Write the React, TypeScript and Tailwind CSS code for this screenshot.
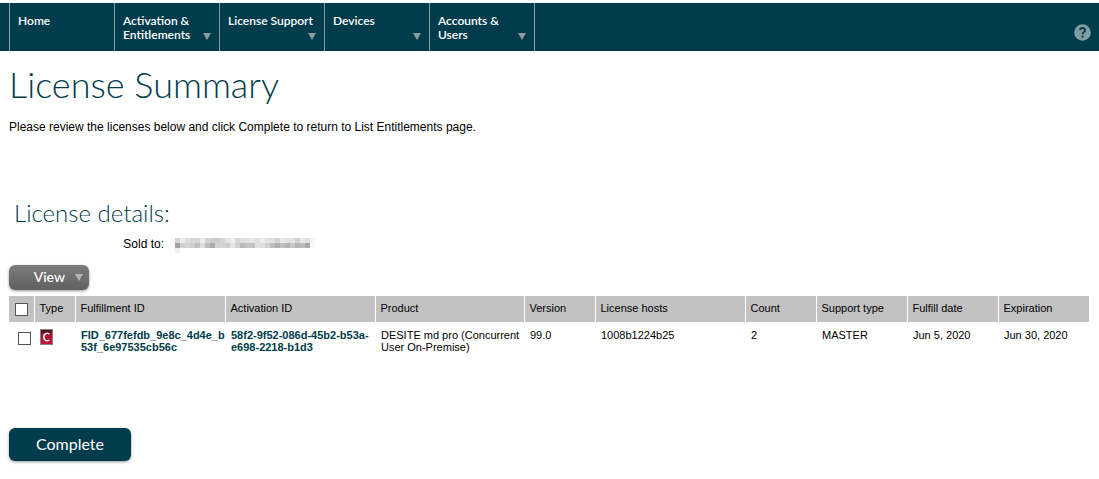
import { useState } from 'react'
import clsx from 'clsx'

const navItems = [
  { label: 'Home', menu: false },
  { label: 'Activation & Entitlements', menu: true },
  { label: 'License Support', menu: true },
  { label: 'Devices', menu: true },
  { label: 'Accounts & Users', menu: true },
]

const columns = [
  { label: 'Type', width: 'w-[41px]' },
  { label: 'Fulfillment ID', width: 'w-[150px]' },
  { label: 'Activation ID', width: 'w-[150px]' },
  { label: 'Product', width: 'w-[149px]' },
  { label: 'Version', width: 'w-[71px]' },
  { label: 'License hosts', width: 'w-[150px]' },
  { label: 'Count', width: 'w-[71px]' },
  { label: 'Support type', width: 'w-[91px]' },
  { label: 'Fulfill date', width: 'w-[91px]' },
  { label: 'Expiration', width: 'w-[91px]' },
]

const licenses = [
  {
    fulfillmentId: 'FID_677fefdb_9e8c_4d4e_b53f_6e97535cb56c',
    activationId: '58f2-9f52-086d-45b2-b53a-e698-2218-b1d3',
    product: 'DESITE md pro (Concurrent User On-Premise)',
    version: '99.0',
    host: '1008b1224b25',
    count: 2,
    support: 'MASTER',
    fulfillDate: 'Jun 5, 2020',
    expiration: 'Jun 30, 2020',
  },
]

// Grey levels of the masked customer name, one entry per block
const maskRows = [
  [249, 213, 236, 221, 214, 214, 236, 211, 204, 203, 216, 228, 240, 214, 222, 226, 232, 222, 238, 226, 226, 213, 232, 226, 226, 208, 232, 222, 246],
  [251, 163, 208, 212, 206, 190, 220, 190, 170, 212, 212, 206, 228, 210, 186, 196, 194, 226, 222, 208, 188, 176, 190, 180, 200, 182, 190, 168, 249],
  [255, 240],
]

function Caret({ className }: { className?: string }) {
  return (
    <svg className={clsx('h-[7px] w-2', className)} viewBox="0 0 8 7" fill="currentColor" aria-hidden="true">
      <path d="M0 0h8L4 7z" />
    </svg>
  )
}

function MaskedName() {
  return (
    <svg className="h-[15px] w-[145px]" viewBox="0 0 29 3" shapeRendering="crispEdges" role="img" aria-label="Hidden">
      {maskRows.map((row, y) =>
        row.map((v, x) => <rect key={`${x}-${y}`} x={x} y={y} width="1" height="1" fill={`rgb(${v},${v},${v})`} />)
      )}
    </svg>
  )
}

function NavBar() {
  return (
    <header className="mt-[3px] flex h-12 items-stretch justify-between bg-[#003c4c] pl-[9px] font-['Lato',sans-serif] text-white">
      <nav className="flex border-r border-[#8c9ba0]">
        {navItems.map((item) => (
          <a
            key={item.label}
            href="#"
            className="flex w-[105px] items-start justify-between border-l border-[#8c9ba0] pt-[11px] pr-2 pl-2 text-xs leading-[14px] font-semibold"
          >
            <span className={clsx(item.label === 'License Support' && '-mr-3 whitespace-nowrap')}>{item.label}</span>
            {item.menu && <Caret className="mt-[19px] shrink-0 text-[#8f9a9f]" />}
          </a>
        ))}
      </nav>
      <a href="#" aria-label="Help" className="mt-[21px] mr-2">
        <svg className="size-[17px]" viewBox="0 0 17 17">
          <circle cx="8.5" cy="8.5" r="8.3" fill="#809da5" />
          <path d="M6 6.2C6.2 3.3 11 3.3 11 6.2c0 1.9-2.4 2-2.4 4" fill="none" stroke="#003c4c" strokeWidth="1.9" />
          <path d="M7.6 11.5h2v2h-2z" fill="#003c4c" />
        </svg>
      </a>
    </header>
  )
}

function ConcurrentIcon() {
  return (
    <svg className="h-4 w-[13px]" viewBox="0 0 13 16" role="img" aria-label="Concurrent">
      <defs>
        <linearGradient id="concurrent" x1="0" y1="0" x2="0" y2="1">
          <stop offset="0" stopColor="#3c0b18" />
          <stop offset="0.4" stopColor="#b5102f" />
          <stop offset="1" stopColor="#c8123a" />
        </linearGradient>
      </defs>
      <rect x="0.5" y="0.5" width="12" height="15" fill="url(#concurrent)" stroke="#858585" />
      <path d="M9.4 5C6.6 3.4 3.8 4.8 3.8 8.1s2.8 4.6 5.6 3" fill="none" stroke="#fff" strokeWidth="1.6" />
    </svg>
  )
}

function Tick({ label, checked, onChange }: { label: string; checked: boolean; onChange: () => void }) {
  return (
    <input
      type="checkbox"
      aria-label={label}
      checked={checked}
      onChange={onChange}
      className="block size-[13px] appearance-none border border-[#555] bg-white checked:bg-[#003c4c]"
    />
  )
}

export default function App() {
  const [selected, setSelected] = useState(false)
  const toggle = () => setSelected(!selected)

  return (
    <div className="bg-white font-['Liberation_Sans',Arial,sans-serif] text-xs text-black">
      <NavBar />
      <main className="pr-[10px] pb-4 pl-[9px]">
        <h1 className="pt-3 font-['Lato',sans-serif] text-4xl leading-[42px] font-light text-[#003c4c]">License Summary</h1>
        <p className="mt-[14px] leading-4">Please review the licenses below and click Complete to return to List Entitlements page.</p>

        <h2 className="mt-[63px] pl-[5px] font-['Lato',sans-serif] text-2xl leading-[30px] font-light text-[#003c4c]">License details:</h2>
        <dl className="mt-2 flex items-start gap-[6px] leading-4">
          <dt className="w-[155px] text-right">Sold to:</dt>
          <dd className="pt-[2px]">
            <MaskedName />
          </dd>
        </dl>

        <button
          type="button"
          className="mt-3 flex h-[25px] w-20 items-center justify-end gap-[10px] rounded-md bg-linear-to-b from-[#7d7d7d] to-[#606060] pr-[6px] font-['Lato',sans-serif] text-sm font-medium text-white shadow-[0_1px_3px_rgba(0,0,0,0.4)]"
        >
          <span className="pb-[2px]">View</span>
          <Caret className="text-[#b5b5b5]" />
        </button>

        <table className="mt-[6px] w-full table-fixed border-collapse text-left text-[11px] leading-3">
          <thead>
            <tr className="h-[26px] bg-[#c2c2c2]">
              <th className="w-[25px] pl-[6px]">
                <Tick label="Select all licenses" checked={selected} onChange={toggle} />
              </th>
              {columns.map((col) => (
                <th key={col.label} className={clsx('border-l border-white pb-[2px] pl-[5px] font-normal', col.width)}>
                  {col.label}
                </th>
              ))}
            </tr>
          </thead>
          <tbody>
            {licenses.map((row) => (
              <tr key={row.fulfillmentId} className="align-top [&>td]:pt-[7px] [&>td]:pl-[6px]">
                <td>
                  <div className="pt-[3px] pl-[3px]">
                    <Tick label="Select license" checked={selected} onChange={toggle} />
                  </div>
                </td>
                <td>
                  <ConcurrentIcon />
                </td>
                <td>
                  <a href="#" className="font-bold break-all text-[#003c4c]">{row.fulfillmentId}</a>
                </td>
                <td>
                  <a href="#" className="font-bold text-[#003c4c]">{row.activationId}</a>
                </td>
                <td>{row.product}</td>
                <td>{row.version}</td>
                <td>{row.host}</td>
                <td>{row.count}</td>
                <td>{row.support}</td>
                <td>{row.fulfillDate}</td>
                <td>{row.expiration}</td>
              </tr>
            ))}
          </tbody>
        </table>

        <button
          type="button"
          className="mt-[75px] h-[33px] w-[122px] rounded-md bg-[#003c4c] pb-[2px] font-['Lato',sans-serif] text-base text-white shadow-[0_1px_3px_rgba(0,0,0,0.4)]"
        >
          Complete
        </button>
      </main>
    </div>
  )
}
